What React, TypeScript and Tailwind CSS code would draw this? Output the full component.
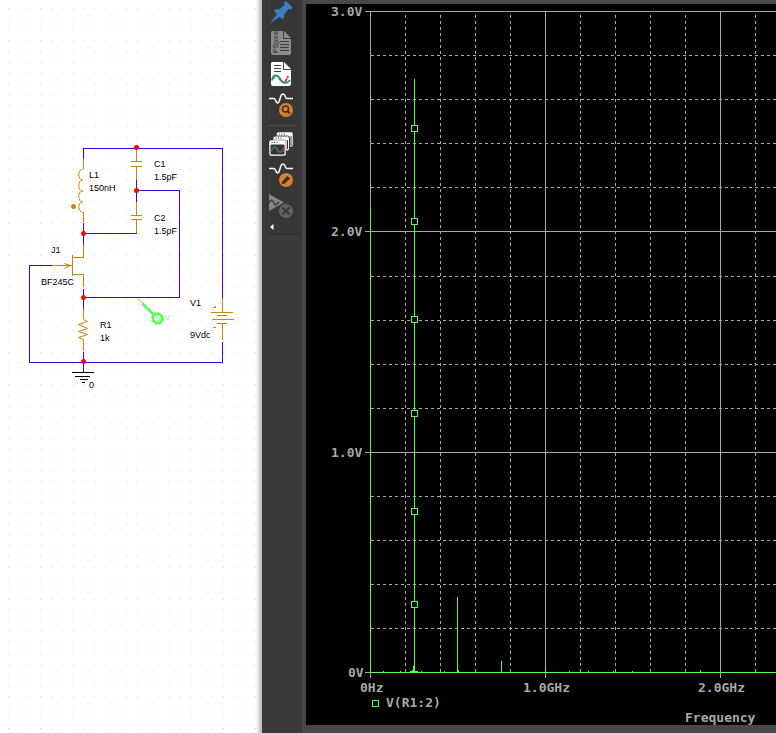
import React from 'react';

interface LabelItem {
  x: number;
  y: number;
  text: string;
}

const PART_LABELS: LabelItem[] = [
  { x: 89, y: 178, text: 'L1' },
  { x: 89, y: 191, text: '150nH' },
  { x: 154, y: 167, text: 'C1' },
  { x: 154, y: 180, text: '1.5pF' },
  { x: 154, y: 221, text: 'C2' },
  { x: 154, y: 234, text: '1.5pF' },
  { x: 51, y: 253, text: 'J1' },
  { x: 41, y: 285, text: 'BF245C' },
  { x: 100, y: 328, text: 'R1' },
  { x: 100, y: 341, text: '1k' },
  { x: 190, y: 306, text: 'V1' },
  { x: 190, y: 338, text: '9Vdc' },
  { x: 89, y: 388, text: '0' },
];

const JUNCTIONS = [
  [136, 147],
  [136, 190],
  [83, 233],
  [83, 297],
  [83, 361],
];

const GRID_STEPS = [0, 11, 21, 32];

const Schematic: React.FC = () => (
  <svg className="block w-full h-full" role="img" aria-label="Oscillator schematic">
    <defs>
      <pattern id="dots" x="8" y="8" width="43" height="43" patternUnits="userSpaceOnUse">
        {GRID_STEPS.map((y) =>
          GRID_STEPS.map((x) => (
            <rect key={`${x}-${y}`} x={x} y={y} width="1" height="1" fill={x % 2 || y % 2 ? '#d3e2e8' : '#b4e2fa'} />
          ))
        )}
      </pattern>
    </defs>
    <rect width="100%" height="100%" fill="url(#dots)" />

    <g transform="translate(.5 .5)" fill="none">
      {/* wires */}
      <path
        d="M83 158V148H222V298M136 179V201M136 190H179V297H83M136 233H83M83 222V244M52 265H29V362H222V341M83 288V309M83 351V372"
        stroke="#3c00f0"
        shapeRendering="crispEdges"
      />

      {/* component leads and plates */}
      <g stroke="#c8860a" shapeRendering="crispEdges">
        <path d="M83 158V168M83 211V221M83 244V257H72M72 254V275M72 274H83V286M51 265H71" />
        <path d="M136 149V161M130 161H141M130 166H141M136 166V179M136 201V215M130 215H141M130 219H141M136 219V232" />
        <path d="M83 308V318M83 338V350" />
        <path d="M222 297V312M210 312H232M216 315H226M211 319H233M216 323H226M222 323V339M212 307H215V305M212 327H215" />
      </g>
      <path
        d="M82 169C77 169 77 179 82 179.500C77 180 77 190 82 190.500C77 191 77 201 82 201.500C77 202 77 212 83 212"
        stroke="#c8860a"
      />
      <path d="M83 319L87 321L78 324L87 328L78 331L87 334L78 337L83 339" stroke="#c8860a" />
      <path d="M64 263L70 265L64 268" stroke="#c8860a" />
      <circle cx="73" cy="206" r="2.5" fill="#c8860a" />

      <path
        d="M71 372H93M74 376H89M79 379H87M81 382H84"
        stroke="#000"
        shapeRendering="crispEdges"
      />

      {/* voltage probe */}
      <path d="M137 298L143 303" stroke="#54fc54" />
      <path d="M142 303L153 314" stroke="#54fc54" strokeWidth="2.5" />
      <circle cx="157" cy="318" r="4.5" stroke="#54fc54" strokeWidth="2.5" />
      <circle cx="157" cy="318" r="6" stroke="#54fc54" strokeWidth="1" strokeDasharray="2.700 2" />
      <path d="M159 316H156V318H159V320H155" stroke="#a8f8b0" />
    </g>

    {JUNCTIONS.map(([x, y]) => (
      <circle key={`${x}-${y}`} cx={x + 0.5} cy={y + 0.5} r="2.5" fill="#f00" />
    ))}

    <text x="165" y="320" className="font-['Liberation_Sans'] text-[8px]" fill="#7cf57c">
      V
    </text>
    {PART_LABELS.map((label) => (
      <text key={`${label.x}-${label.y}`} x={label.x} y={label.y} className="font-['Liberation_Sans'] text-[9px]">
        {label.text}
      </text>
    ))}
  </svg>
);

const PinIcon = () => (
  <svg width="24" height="24" viewBox="0 0 24 24" fill="#3b7fc4">
    <path d="M1 23.5L8 14L11 16.5Z" />
    <path d="M4.5 10.5C7 9 9 9 10 9.5L15.5 5L15 2.5L17 1L23.5 7.5L22 9.5L19.5 9L15 14.5C15.500 16 15 18 13.500 19.500Z" />
  </svg>
);

const PSpiceIcon = () => (
  <svg width="24" height="24" viewBox="0 0 24 24">
    <path d="M3 0H15L22 7V22Q22 24 20 24H4Q2 24 2 22V1Z" fill="#8b8b8b" />
    <path d="M14.500 0V7.500H22" fill="none" stroke="#383838" />
    <path d="M11 10.500H20M11 13.500H20M11 16.500H20M11 19.500H20" stroke="#383838" />
    <text transform="translate(8.500 22) rotate(-90)" className="font-['Liberation_Sans'] text-[7px]" fill="#222">
      PSpice
    </text>
  </svg>
);

const ReportIcon = () => (
  <svg width="24" height="24" viewBox="0 0 24 24" fill="none">
    <path d="M3 0H15L22 7V22Q22 24 20 24H4Q2 24 2 22V1Z" fill="#fff" />
    <path d="M14.500 0V7.500H22M5 3.500H12M5 6.500H12M5 9.500H12" stroke="#444" />
    <path d="M4 17C6 12 9 13 11 17S16 23 19 14" stroke="#df2345" strokeWidth="1.8" strokeDasharray="3.500 .8" />
    <path d="M3 18.500C4 12 8 12 11 17S18 22 21 18" stroke="#159b70" strokeWidth="1.8" />
  </svg>
);

const Wave = () => (
  <path
    d="M0 5.500H5C7 5.500 6.500 10 8.500 10C11.500 10 10.500 1 14 1C17 1 15.500 5.500 18 5.500H24"
    fill="none"
    stroke="#fff"
    strokeWidth="1.5"
  />
);

const WaveZoomIcon = () => (
  <svg width="24" height="24" viewBox="0 0 24 24">
    <Wave />
    <circle cx="17" cy="17" r="7" fill="#dc7f2c" />
    <circle cx="16.500" cy="16" r="3" fill="none" stroke="#393027" strokeWidth="1.5" />
    <path d="M18.500 18L21 20.500" stroke="#393027" strokeWidth="2" />
  </svg>
);

const WindowsIcon = () => (
  <svg width="24" height="24" viewBox="0 0 24 24">
    <rect x="7.500" y="0" width="16.500" height="15" rx="2" fill="#fff" stroke="#383838" strokeWidth=".5" />
    <path d="M22 4V14" stroke="#383838" />
    <rect x="4" y="4" width="16.500" height="15" rx="2" fill="#fff" stroke="#383838" />
    <path d="M18.500 8V17" stroke="#383838" />
    <rect x="0" y="8" width="17" height="16" rx="2" fill="#fff" stroke="#383838" strokeWidth=".5" />
    <rect x="1.500" y="12.500" width="14" height="10" rx="1" fill="#303536" />
    <path d="M10 2H16M6.500 6H13M2.500 10.500H9" stroke="#383838" strokeDasharray="1 1.5" />
    <path d="M2 19C5 13 7 15 8 18S12 22 15 15" fill="none" stroke="#d72440" strokeWidth="1.3" />
    <path d="M2 20C5 13 7 14 9 18S13 19 15 19" fill="none" stroke="#188956" strokeWidth="1.3" />
  </svg>
);

const WaveEditIcon = () => (
  <svg width="24" height="24" viewBox="0 0 24 24">
    <Wave />
    <circle cx="17" cy="17" r="7" fill="#dc7f2c" />
    <path d="M12.500 21L13.500 18L18.500 13L21 15.500L16 20.500Z" fill="#393027" />
  </svg>
);

const StopIcon = () => (
  <svg width="24" height="24" viewBox="0 0 24 24" fill="none">
    <path d="M0 0L15 8.500L0 17Z" fill="#858585" />
    <path d="M0 9C2 5 4 6 5 9S7 11 10 8" stroke="#383838" strokeWidth="1.5" />
    <circle cx="17" cy="17" r="7" fill="#636363" />
    <path d="M13.500 13.500L20.500 20.500M20.500 13.500L13.500 20.500" stroke="#383838" strokeWidth="2" />
  </svg>
);

interface Tool {
  name: string;
  icon: React.ReactNode;
}

const ToolGroup: React.FC<{ tools: Tool[] }> = ({ tools }) => (
  <div className="flex flex-col gap-[7px] pl-1">
    {tools.map((tool) => (
      <button key={tool.name} type="button" aria-label={tool.name} className="size-6">
        {tool.icon}
      </button>
    ))}
  </div>
);

const FILE_TOOLS: Tool[] = [
  { name: 'Pin', icon: <PinIcon /> },
  { name: 'Netlist', icon: <PSpiceIcon /> },
  { name: 'Output file', icon: <ReportIcon /> },
  { name: 'View results', icon: <WaveZoomIcon /> },
];

const RUN_TOOLS: Tool[] = [
  { name: 'Windows', icon: <WindowsIcon /> },
  { name: 'Edit profile', icon: <WaveEditIcon /> },
  { name: 'Stop', icon: <StopIcon /> },
];

const Toolbar: React.FC = () => (
  <aside className="shrink-0 w-10 bg-[#3a3a3a] pl-[3px]">
    <div className="w-[34px] flex flex-col bg-[#373737] border-b border-[#303030] rounded-b-sm pb-1">
      <ToolGroup tools={FILE_TOOLS} />
      <hr className="mx-0.5 mt-2 mb-1.5 border-[#4d4d4d]" />
      <ToolGroup tools={RUN_TOOLS} />
      <button type="button" aria-label="Collapse" className="self-start ml-[5px] mt-1.5">
        <svg className="block" width="4" height="6" viewBox="0 0 4 6" fill="#fff">
          <path d="M3.500 0V6L0 3Z" />
        </svg>
      </button>
    </div>
  </aside>
);

const V_LINES = [35, 70, 105, 140, 210, 245, 280, 315, 385, 420, 455, 490];
const H_LINES = [51, 95, 139, 183, 272, 316, 360, 404, 492, 536, 580, 624];
const MARKERS = [124, 217, 315, 409, 507, 600];
const AXIS_LABELS: LabelItem[] = [
  { x: 25, y: 12, text: '3.0V' },
  { x: 25, y: 232, text: '2.0V' },
  { x: 25, y: 453, text: '1.0V' },
  { x: 42, y: 673, text: '0V' },
  { x: 54, y: 688, text: '0Hz' },
  { x: 217, y: 688, text: '1.0GHz' },
  { x: 392, y: 688, text: '2.0GHz' },
  { x: 80, y: 703, text: 'V(R1:2)' },
  { x: 379, y: 718, text: 'Frequency' },
];

const Plot: React.FC = () => (
  <svg className="block w-full h-[721px] bg-black" role="img" aria-label="Frequency spectrum">
    <g transform="translate(.5 .5)" shapeRendering="crispEdges" fill="none" stroke="#a8a8a8">
      {V_LINES.map((x) => (
        <line key={x} x1={64 + x} x2={64 + x} y1="10" y2="668" strokeDasharray="3 3" />
      ))}
      {H_LINES.map((y) => (
        <line key={y} x1="64" x2="100%" y1={y} y2={y} strokeDasharray="3 3" />
      ))}
      {[7, 227, 448, 668].map((y) => (
        <line key={y} x1="58" x2="100%" y1={y} y2={y} />
      ))}
      <path d="M64 7V673M239 7V673M414 7V673" />

      {/* trace */}
      <g stroke="#54fc54">
        <line x1="64" x2="100%" y1="668" y2="668" />
        <path d="M64 204V668M108 74V668M151 592V668M195 656V668M239 663V668" />
        <path d="M107 661V668M106 665V668M103 667H111M76 667H77M93 667H94M114 667H115M137 667H138M152 665V668M262 667H263M281 667H282M306 667H307M325 667H326M394 665V668" />
        {MARKERS.map((y) => (
          <rect key={y} x="105" y={y - 3} width="6" height="6" fill="#000" />
        ))}
        <rect x="66" y="696" width="6" height="6" />
      </g>
    </g>
    {AXIS_LABELS.map((label) => (
      <text
        key={`${label.x}-${label.y}`}
        x={label.x}
        y={label.y}
        fill="#a8a8a8"
        className="font-['DejaVu_Sans_Mono'] text-[13px] font-bold"
      >
        {label.text}
      </text>
    ))}
  </svg>
);

const App: React.FC = () => {
  return (
    <div className="flex min-h-screen overflow-hidden bg-[#484848] font-['Liberation_Sans']">
      <section className="flex shrink-0 w-[262px] bg-white">
        <div className="flex-1">
          <Schematic />
        </div>
        <div className="w-1.5 bg-linear-to-r from-white to-[#b5b5b5]" />
      </section>
      <Toolbar />
      <main className="flex-1 min-w-0 pl-1 pt-1 pb-2">
        <Plot />
      </main>
    </div>
  );
};

export default App;
